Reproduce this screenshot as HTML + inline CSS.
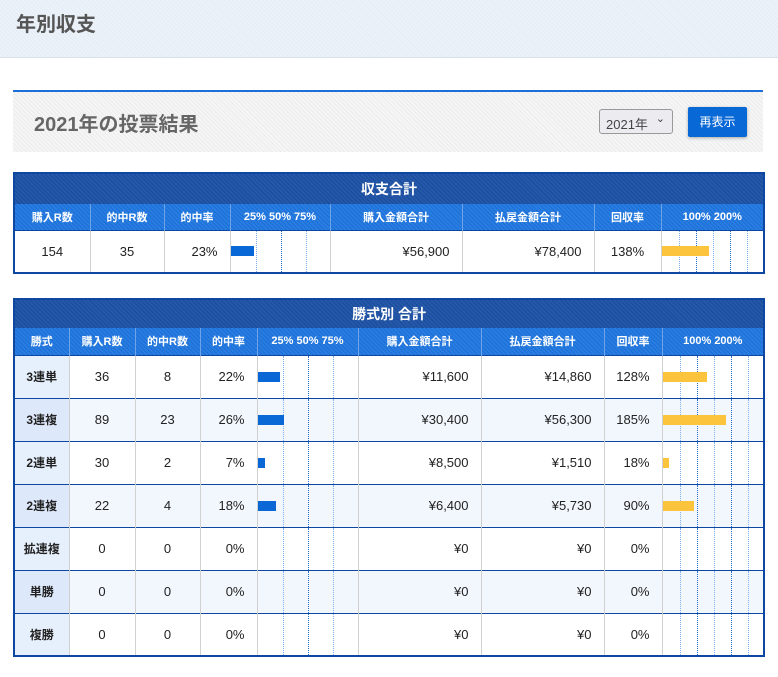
<!DOCTYPE html>
<html><head><meta charset="utf-8"><style>
*{box-sizing:border-box;margin:0;padding:0}
body{width:778px;height:677px;background:#fff;font-family:"Liberation Sans","Noto Sans CJK JP",sans-serif;color:#222;position:relative;overflow:hidden}
.hd{position:absolute;left:0;top:0;width:778px;height:58px;background:repeating-linear-gradient(45deg,#e3ecf7 0 1px,#edf2f9 1px 3px);border-bottom:1px solid #d9e1ea}
.hd h1{position:absolute;left:16px;top:8px;font-size:20px;font-weight:bold;color:#555}
.sec{position:absolute;left:13px;top:90px;width:750px;height:62px;border-top:2px solid #1a6fd8;background:repeating-linear-gradient(45deg,#ececec 0 1px,#f5f5f5 1px 3px)}
.sec h2{position:absolute;left:21px;top:16px;font-size:20px;font-weight:bold;color:#666}
.sel{position:absolute;left:586px;top:17px;width:74px;height:25px;border:1px solid #999;border-radius:3px;background:#ececf0;font-size:13px;color:#444;padding:4px 0 0 6px}
.sel span{position:absolute;right:7px;top:2px;font-size:11px}
.btn{position:absolute;left:675px;top:15px;width:59px;height:30px;background:#0868d6;color:#fff;font-size:12px;text-align:center;line-height:30px;border-radius:2px;box-shadow:0 1px 3px rgba(0,0,0,.3)}
table{position:absolute;left:13px;width:750px;border-collapse:collapse;table-layout:fixed;border:2px solid #0d47a1}
th,td{font-size:13px}
.tt th{background:repeating-linear-gradient(45deg,#1a4c9c 0 1px,#2558a8 1px 3px);color:#fff;font-weight:bold;font-size:14px}
.hh th{background:repeating-linear-gradient(45deg,#1a6fd8 0 1px,#2a7de0 1px 3px);color:#fff;font-size:11px;font-weight:bold;border-left:1px solid #6fa3e8}
td{text-align:right;padding-right:12px;border-left:1px solid #d0d0d0;border-top:1px solid #0d47a1}
td.c{text-align:center;padding:0}
td.k{text-align:center;padding:0;font-weight:bold;background:#e6effc;font-size:12px}
tr.alt td{background:#f2f7fd}
tr.alt td.k{background:#dde8fa}
td.b{padding:0;position:relative}
.ln{position:absolute;top:0;bottom:0;width:0;border-left:1px dotted #7fb0ee}
.ln.d{border-left-color:#2a6fd0}
.bar{position:absolute;left:0;top:50%;margin-top:-5px;height:10px;background:#0a68d6}
.bar.y{background:#fcc43c}
</style></head><body>
<div class="hd"><h1>年別収支</h1></div>
<div class="sec"><h2>2021年の投票結果</h2><div class="sel">2021年<span>⌄</span></div><div class="btn">再表示</div></div>

<table style="top:172px">
<colgroup><col style="width:76px"><col style="width:74px"><col style="width:66px"><col style="width:100px"><col style="width:132px"><col style="width:132px"><col style="width:67px"><col style="width:103px"></colgroup>
<tr class="tt" style="height:31px"><th colspan="8">収支合計</th></tr>
<tr class="hh" style="height:26px"><th>購入R数</th><th>的中R数</th><th>的中率</th><th>25% 50% 75%</th><th>購入金額合計</th><th>払戻金額合計</th><th>回収率</th><th>100% 200%</th></tr>
<tr style="height:43px"><td class="c">154</td><td class="c">35</td><td>23%</td><td class="b"><div class="ln" style="left:25px"></div><div class="ln d" style="left:50px"></div><div class="ln" style="left:75px"></div><div class="bar" style="width:23px"></div></td><td>¥56,900</td><td>¥78,400</td><td class="c">138%</td><td class="b"><div class="ln" style="left:17px"></div><div class="ln d" style="left:34px"></div><div class="ln" style="left:51px"></div><div class="ln d" style="left:68px"></div><div class="ln" style="left:85px"></div><div class="bar y" style="width:47px"></div></td></tr>
</table>

<table style="top:298px">
<colgroup><col style="width:55px"><col style="width:66px"><col style="width:65px"><col style="width:57px"><col style="width:101px"><col style="width:123px"><col style="width:123px"><col style="width:58px"><col style="width:102px"></colgroup>
<tr class="tt" style="height:29px"><th colspan="9">勝式別 合計</th></tr>
<tr class="hh" style="height:27px"><th>勝式</th><th>購入R数</th><th>的中R数</th><th>的中率</th><th>25% 50% 75%</th><th>購入金額合計</th><th>払戻金額合計</th><th>回収率</th><th>100% 200%</th></tr>
<tr style="height:43px"><td class="k">3連単</td><td class="c">36</td><td class="c">8</td><td>22%</td><td class="b"><div class="ln" style="left:25px"></div><div class="ln d" style="left:50px"></div><div class="ln" style="left:75px"></div><div class="bar" style="width:22px"></div></td><td>¥11,600</td><td>¥14,860</td><td>128%</td><td class="b"><div class="ln" style="left:17px"></div><div class="ln d" style="left:34px"></div><div class="ln" style="left:51px"></div><div class="ln d" style="left:68px"></div><div class="ln" style="left:85px"></div><div class="bar y" style="width:44px"></div></td></tr>
<tr class="alt" style="height:43px"><td class="k">3連複</td><td class="c">89</td><td class="c">23</td><td>26%</td><td class="b"><div class="ln" style="left:25px"></div><div class="ln d" style="left:50px"></div><div class="ln" style="left:75px"></div><div class="bar" style="width:26px"></div></td><td>¥30,400</td><td>¥56,300</td><td>185%</td><td class="b"><div class="ln" style="left:17px"></div><div class="ln d" style="left:34px"></div><div class="ln" style="left:51px"></div><div class="ln d" style="left:68px"></div><div class="ln" style="left:85px"></div><div class="bar y" style="width:63px"></div></td></tr>
<tr style="height:43px"><td class="k">2連単</td><td class="c">30</td><td class="c">2</td><td>7%</td><td class="b"><div class="ln" style="left:25px"></div><div class="ln d" style="left:50px"></div><div class="ln" style="left:75px"></div><div class="bar" style="width:7px"></div></td><td>¥8,500</td><td>¥1,510</td><td>18%</td><td class="b"><div class="ln" style="left:17px"></div><div class="ln d" style="left:34px"></div><div class="ln" style="left:51px"></div><div class="ln d" style="left:68px"></div><div class="ln" style="left:85px"></div><div class="bar y" style="width:6px"></div></td></tr>
<tr class="alt" style="height:43px"><td class="k">2連複</td><td class="c">22</td><td class="c">4</td><td>18%</td><td class="b"><div class="ln" style="left:25px"></div><div class="ln d" style="left:50px"></div><div class="ln" style="left:75px"></div><div class="bar" style="width:18px"></div></td><td>¥6,400</td><td>¥5,730</td><td>90%</td><td class="b"><div class="ln" style="left:17px"></div><div class="ln d" style="left:34px"></div><div class="ln" style="left:51px"></div><div class="ln d" style="left:68px"></div><div class="ln" style="left:85px"></div><div class="bar y" style="width:31px"></div></td></tr>
<tr style="height:43px"><td class="k">拡連複</td><td class="c">0</td><td class="c">0</td><td>0%</td><td class="b"><div class="ln" style="left:25px"></div><div class="ln d" style="left:50px"></div><div class="ln" style="left:75px"></div></td><td>¥0</td><td>¥0</td><td>0%</td><td class="b"><div class="ln" style="left:17px"></div><div class="ln d" style="left:34px"></div><div class="ln" style="left:51px"></div><div class="ln d" style="left:68px"></div><div class="ln" style="left:85px"></div></td></tr>
<tr class="alt" style="height:43px"><td class="k">単勝</td><td class="c">0</td><td class="c">0</td><td>0%</td><td class="b"><div class="ln" style="left:25px"></div><div class="ln d" style="left:50px"></div><div class="ln" style="left:75px"></div></td><td>¥0</td><td>¥0</td><td>0%</td><td class="b"><div class="ln" style="left:17px"></div><div class="ln d" style="left:34px"></div><div class="ln" style="left:51px"></div><div class="ln d" style="left:68px"></div><div class="ln" style="left:85px"></div></td></tr>
<tr style="height:43px"><td class="k">複勝</td><td class="c">0</td><td class="c">0</td><td>0%</td><td class="b"><div class="ln" style="left:25px"></div><div class="ln d" style="left:50px"></div><div class="ln" style="left:75px"></div></td><td>¥0</td><td>¥0</td><td>0%</td><td class="b"><div class="ln" style="left:17px"></div><div class="ln d" style="left:34px"></div><div class="ln" style="left:51px"></div><div class="ln d" style="left:68px"></div><div class="ln" style="left:85px"></div></td></tr>
</table>
</body></html>
